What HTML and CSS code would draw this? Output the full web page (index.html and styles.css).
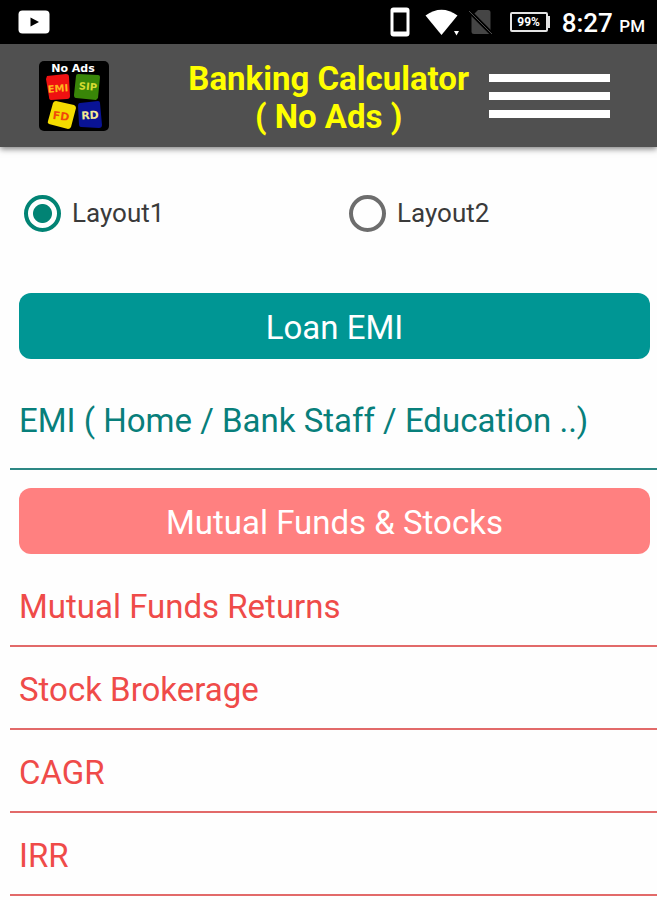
FILE: index.html
```html
<!DOCTYPE html>
<html lang="en">
<head>
  <meta charset="utf-8">
  <meta name="viewport" content="width=device-width, initial-scale=1">
  <title>Banking Calculator</title>
  <link rel="stylesheet" href="styles.css">
</head>
<body>
  <div class="status-bar">
    <svg class="status-video" width="32" height="24" viewBox="0 0 32 24" aria-hidden="true">
      <rect x="0.5" y="0.5" width="31" height="23" rx="4" fill="#fff"/>
      <path d="M12.5 7.500v9l8.500-4.500z" fill="#000"/>
    </svg>
    <svg class="status-phone" width="20" height="30" viewBox="0 0 20 30" aria-hidden="true">
      <rect x="0.5" y="0.5" width="19" height="29" rx="3" fill="#fff"/>
      <rect x="3.5" y="5.5" width="13" height="19" fill="#000"/>
    </svg>
    <svg class="status-wifi" width="34" height="28" viewBox="0 0 34 28" aria-hidden="true">
      <path d="M0.5 7.5Q16.500-4 32.500 7.500L16.500 27z" fill="#fff"/>
      <path d="M29 23h5l-2.500 4.500z" fill="#fff"/>
    </svg>
    <svg class="status-sim" width="24" height="26" viewBox="0 0 24 26" aria-hidden="true">
      <path d="M9 1h10q2.500 0 2.500 2.500V25H5q-2.500 0-2.500-2.500V7.500z" fill="#454545"/>
      <path d="M0 2l23 23" stroke="#000" stroke-width="4"/>
      <path d="M0 2l23 23" stroke="#4d4d4d" stroke-width="1"/>
    </svg>
    <div class="battery"><span class="battery-level">99%</span></div>
    <div class="clock">8:27 <span class="clock-period">PM</span></div>
  </div>

  <header class="app-bar">
    <svg class="app-logo" width="70" height="70" viewBox="0 0 70 70" role="img" aria-label="No Ads">
      <rect width="70" height="70" rx="5" fill="#000"/>
      <g class="logo-text">
        <text x="34" y="11" font-size="11" fill="#fff">No Ads</text>
        <path d="M8 15l19-2q3 0 3 3l1 19q0 3-3 3l-16 1q-2 0-2-3L7 18z" fill="#ef1111"/>
        <path d="M39 13l20 1q2 0 2 2l-2 21-2 2-20-2q-2 0-2-3l2-19q0-2 2-2z" fill="#398608"/>
        <path d="M17 40l18 4q2 1 2 3l-5 19q-1 2-3 2L10 63q-2-1-1-3l5-18q1-2 3-2z" fill="#f4dc00"/>
        <path d="M41 42l18-2q2 0 2 2l2 22q0 3-3 3l-18-1q-2 0-2-3l-1-18q0-3 2-3z" fill="#091395"/>
        <text x="19" y="31" font-size="10" fill="#ffb51c" transform="rotate(-4 19 27)">EMI</text>
        <text x="49" y="29" font-size="10" fill="#d7dc32" transform="rotate(5 49 25)">SIP</text>
        <text x="22" y="59" font-size="11" fill="#f04a0a" transform="rotate(8 22 55)">FD</text>
        <text x="51" y="58" font-size="11" fill="#f3e994" transform="rotate(-3 51 54)">RD</text>
      </g>
    </svg>
    <h1 class="app-title">Banking Calculator<br>( No Ads )</h1>
    <button class="menu-button" type="button" aria-label="Menu">
      <span class="menu-line"></span>
      <span class="menu-line"></span>
      <span class="menu-line"></span>
    </button>
  </header>

  <main class="content">
    <div class="layout-options" role="radiogroup" aria-label="Layout">
      <label class="option" for="layout1"><input class="radio" type="radio" id="layout1" name="layout" checked>Layout1</label>
      <label class="option" for="layout2"><input class="radio" type="radio" id="layout2" name="layout">Layout2</label>
    </div>

    <section class="group loan">
      <button class="group-button" type="button">Loan EMI</button>
      <nav class="links">
        <a class="link" href="#emi">EMI ( Home / Bank Staff / Education ..)</a>
      </nav>
    </section>

    <section class="group funds">
      <button class="group-button" type="button">Mutual Funds &amp; Stocks</button>
      <nav class="links">
        <a class="link" href="#returns">Mutual Funds Returns</a>
        <a class="link" href="#brokerage">Stock Brokerage</a>
        <a class="link" href="#cagr">CAGR</a>
        <a class="link" href="#irr">IRR</a>
      </nav>
    </section>
  </main>
</body>
</html>
```
FILE: styles.css
```css
* {
  box-sizing: border-box;
}

body {
  margin: 0;
  background: #fefefe;
  color: #3a3a3a;
  font-family: Roboto, "Liberation Sans", sans-serif;
}

.status-bar {
  display: flex;
  align-items: center;
  height: 44px;
  padding: 0 12px 0 18px;
  background: #000;
  color: #fff;
}

.status-phone {
  margin-left: auto;
}

.status-wifi {
  margin-left: 15px;
}

.status-sim {
  margin-left: 10px;
}

.battery {
  position: relative;
  display: flex;
  align-items: center;
  justify-content: center;
  width: 38px;
  height: 20px;
  margin: 0 14px 0 17px;
  border: 2px solid #e4e4e4;
  border-radius: 2px;
}

.battery::after {
  content: "";
  position: absolute;
  top: 2px;
  right: -4px;
  width: 2px;
  height: 12px;
  background: #e4e4e4;
}

.battery-level {
  font-size: 12px;
  font-weight: 700;
  line-height: 16px;
}

.clock {
  padding-top: 4px;
  font-size: 26px;
  font-weight: 500;
  line-height: 40px;
  white-space: nowrap;
}

.clock-period {
  font-size: 17px;
}

.app-bar {
  position: relative;
  display: flex;
  align-items: center;
  gap: 20px;
  min-height: 103px;
  padding: 0 47px 0 39px;
  background: #505050;
  box-shadow: 0 2px 6px rgba(0, 0, 0, 0.5);
}

.app-logo {
  flex: none;
}

.logo-text {
  font-family: "DejaVu Sans", sans-serif;
  font-weight: 700;
  text-anchor: middle;
}

.app-title {
  margin: 0 0 0 auto;
  padding-top: 4px;
  color: #ff0;
  font-size: 33px;
  font-weight: 700;
  line-height: 38px;
  text-align: center;
}

.menu-button {
  display: flex;
  flex: none;
  flex-direction: column;
  gap: 10px;
  width: 121px;
  padding: 0;
  border: 0;
  background: none;
}

.menu-line {
  height: 8px;
  background: #fff;
}

.layout-options {
  display: grid;
  grid-template-columns: 1fr 1fr;
  padding: 39px 7px 53px 0;
}

.option {
  display: flex;
  align-items: center;
  gap: 11px;
  height: 54px;
  padding-left: 24px;
  font-size: 26px;
}

.radio {
  width: 37px;
  height: 37px;
  margin: 0;
  border: 4px solid #6d6d6d;
  border-radius: 50%;
  appearance: none;
}

.radio:checked {
  border-color: #018374;
  background: radial-gradient(circle, #018374 9px, transparent 10px);
}

.group {
  padding-left: 10px;
}

.loan {
  --fill: #009694;
  --ink: #087f7b;
  --rule: #2d8784;
  --row: 101px;
}

.funds {
  --fill: #ff8080;
  --ink: #ef4b49;
  --rule: #e26a69;
  --row: 83px;
  margin-top: 18px;
}

.group-button {
  display: block;
  width: calc(100% - 16px);
  height: 66px;
  margin: 0 7px 10px 9px;
  padding: 4px 0 0;
  border: 0;
  border-radius: 12px;
  background: var(--fill);
  color: #fff;
  font: inherit;
  font-size: 33px;
  line-height: 38px;
}

.link {
  display: flex;
  align-items: center;
  min-height: var(--row);
  padding: 4px 0 0 9px;
  border-bottom: 2px solid var(--rule);
  color: var(--ink);
  font-size: 33px;
  line-height: 38px;
  text-decoration: none;
}
```
